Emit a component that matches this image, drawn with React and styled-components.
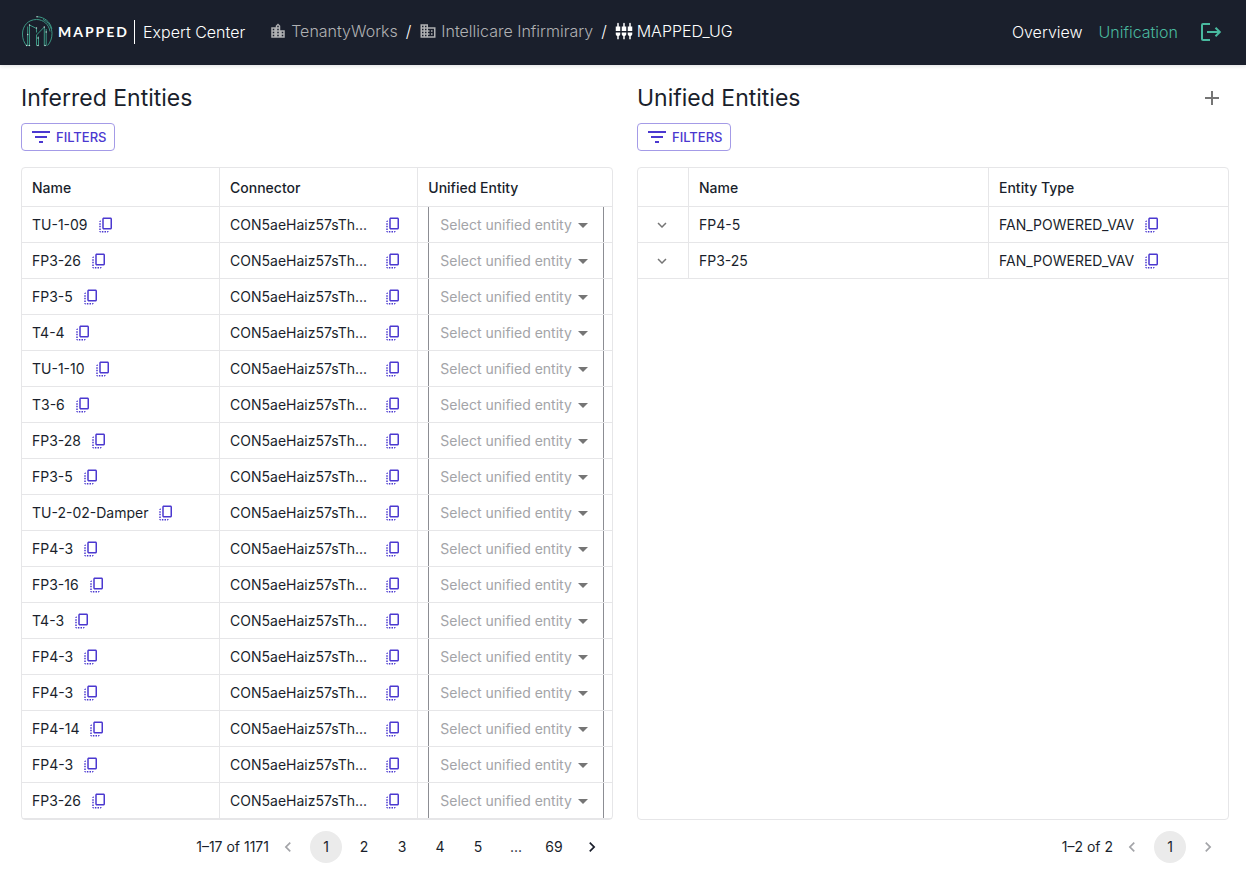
import React from "react";
import styled, { createGlobalStyle, ThemeProvider } from "styled-components";
import {
  MdAdd,
  MdArrowDropDown,
  MdChevronLeft,
  MdChevronRight,
  MdCopyAll,
  MdDomain,
  MdExpandMore,
  MdFilterList,
  MdLocationCity,
  MdSettingsInputComponent,
} from "react-icons/md";

const theme = {
  ink: "#1a1f2c",
  navy: "#1a1f2c",
  teal: "#49b99f",
  primary: "#4b38d0",
  primaryLight: "#a49be7",
  line: "#e6e6e8",
  muted: "#a3a4a8",
  grey: "#757575",
  selected: "#ebebeb",
};

const GlobalStyle = createGlobalStyle`
  *, *::before, *::after {
    box-sizing: border-box;
  }

  body {
    margin: 0;
    background: #fff;
    color: ${theme.ink};
    font-family: Inter, "Liberation Sans", sans-serif;
    font-size: 14px;
    line-height: 20px;
  }

  button, select {
    font: inherit;
    color: inherit;
  }

  svg {
    display: block;
    flex: none;
  }
`;

const Page = styled.div`
  display: flex;
  flex-direction: column;
  min-height: 100vh;
`;

const TopBar = styled.header`
  display: flex;
  align-items: center;
  height: 65px;
  padding: 0 24px 2px 21px;
  background: ${({ theme }) => theme.navy};
  color: #fff;
  font-size: 16px;
  font-weight: 300;
  line-height: 24px;
  box-shadow: 0 1px 4px rgba(26, 31, 44, 0.15);
`;

const Brand = styled.a`
  display: flex;
  align-items: center;
  color: inherit;
  text-decoration: none;
`;

const Wordmark = styled.span`
  margin-left: 5px;
  padding-right: 5px;
  font-family: Lato, sans-serif;
  font-size: 14px;
  font-weight: 700;
  letter-spacing: 2px;
`;

const Product = styled.span`
  padding-left: 8px;
  border-left: 1px solid #fff;
`;

const Breadcrumbs = styled.nav`
  display: flex;
  align-items: center;
  gap: 8px;
  margin-left: 24px;
  padding-bottom: 2px;
`;

const Crumb = styled.a`
  display: flex;
  align-items: center;
  gap: 4px;
  color: ${({ $current }) => ($current ? "#fff" : "#b0b1b3")};
  text-decoration: none;
`;

const Nav = styled.nav`
  display: flex;
  align-items: center;
  gap: 16px;
  margin-left: auto;
`;

const NavLink = styled.a`
  color: ${({ $active, theme }) => ($active ? theme.teal : "#fff")};
  text-decoration: none;
`;

const IconButton = styled.button`
  display: flex;
  align-items: center;
  justify-content: center;
  padding: ${({ $pad = 5 }) => $pad}px;
  border: 0;
  background: none;
  color: ${({ $color }) => $color || "inherit"};
  cursor: pointer;
`;

const LogoutButton = styled(IconButton)`
  margin-left: 4px;
`;

const Main = styled.main`
  flex: 1;
  display: grid;
  grid-template-columns: minmax(0, 1fr) minmax(0, 1fr);
  gap: 24px;
  padding: 13px 17px 11px 21px;
`;

const Panel = styled.section`
  display: flex;
  flex-direction: column;
  align-items: flex-start;
`;

const TitleRow = styled.div`
  display: flex;
  align-items: center;
  justify-content: space-between;
  width: 100%;
  height: 40px;
  margin-bottom: 5px;
`;

const Title = styled.h1`
  margin: 0;
  font-size: 23px;
  font-weight: 400;
  line-height: 32px;
`;

const FilterButton = styled.button`
  display: flex;
  align-items: center;
  gap: 3px;
  height: 28px;
  padding: 0 8px 0 7px;
  margin-bottom: 16px;
  border: 1px solid ${({ theme }) => theme.primaryLight};
  border-radius: 4px;
  background: #fff;
  color: ${({ theme }) => theme.primary};
  font-size: 13px;
  font-weight: 500;
  cursor: pointer;
`;

const Frame = styled.div`
  flex: 1;
  width: 100%;
  border: 1px solid ${({ theme }) => theme.line};
  border-radius: 4px;
`;

const Table = styled.table`
  width: 100%;
  table-layout: fixed;
  border-collapse: separate;
  border-spacing: 0;
`;

const Th = styled.th`
  width: ${({ $width }) => $width || "auto"};
  height: 39px;
  padding: 2px 10px 0;
  border-bottom: 1px solid ${({ theme }) => theme.line};
  font-weight: 500;
  text-align: left;

  & + & {
    border-left: 1px solid ${({ theme }) => theme.line};
  }
`;

const Td = styled.td`
  height: 36px;
  padding: 0 10px;
  border-bottom: 1px solid ${({ theme }) => theme.line};
  white-space: nowrap;

  & + & {
    border-left: 1px solid ${({ theme }) => theme.line};
  }
`;

const CopyCell = styled.div`
  display: flex;
  align-items: center;
  justify-content: ${({ $spread }) => ($spread ? "space-between" : "flex-start")};
  gap: 4px;
`;

const SelectBox = styled.div`
  position: relative;
  width: 176px;
  height: 35px;
  color: ${({ theme }) => theme.muted};

  svg {
    position: absolute;
    top: 6px;
    right: 9px;
    color: ${({ theme }) => theme.grey};
    pointer-events: none;
  }
`;

const Select = styled.select`
  display: block;
  width: 100%;
  height: 100%;
  padding: 0 30px 0 11px;
  border: solid #8c8d93;
  border-width: 0 1px;
  border-radius: 0;
  appearance: none;
  background: #fff;
`;

const Pager = styled.nav`
  display: flex;
  align-items: center;
  align-self: flex-end;
  gap: 6px;
  height: 32px;
  margin-top: 11px;
  padding-right: 5px;
`;

const PagerRange = styled.span`
  margin-right: -3px;
`;

const PageButton = styled.button`
  display: flex;
  align-items: center;
  justify-content: center;
  width: 32px;
  height: 32px;
  padding: 0;
  border: 0;
  border-radius: 16px;
  background: ${({ $selected, theme }) => ($selected ? theme.selected : "none")};
  cursor: pointer;

  &:disabled {
    color: ${({ theme }) => theme.muted};
    cursor: default;
  }
`;

const PageGap = styled.span`
  width: 32px;
  text-align: center;
`;

const CONNECTOR = "CON5aeHaiz57sTh...";

const inferred = [
  "TU-1-09",
  "FP3-26",
  "FP3-5",
  "T4-4",
  "TU-1-10",
  "T3-6",
  "FP3-28",
  "FP3-5",
  "TU-2-02-Damper",
  "FP4-3",
  "FP3-16",
  "T4-3",
  "FP4-3",
  "FP4-3",
  "FP4-14",
  "FP4-3",
  "FP3-26",
];

const unified = [
  { name: "FP4-5", type: "FAN_POWERED_VAV" },
  { name: "FP3-25", type: "FAN_POWERED_VAV" },
];

const nodes = [
  [16, 0.7],
  [8.5, 9],
  [6.7, 18.5],
  [15.5, 12],
  [17, 22],
  [23.3, 11],
  [25.2, 16],
  [5.5, 29.5],
  [8.5, 29.5],
  [17, 29.5],
  [24, 29.5],
];

const LogoMark = () => (
  <svg width="32" height="32" viewBox="0 0 32 32" fill="none" aria-hidden="true">
    <g stroke="#3b9583">
      <path d="M5.5 29.500C2.800 26.500 1.500 22.500 1.500 18 1.500 9.500 7.500 3.500 15.500 3.500c7 0 12.500 5 13.500 12" />
      <path d="M16 .7C23.500 1 29.500 6 30.800 13" />
      <path d="M22 3.500c5.500 2.500 9 8 9 14 0 4.500-1.500 9-4.500 12" />
      <path d="M5.500 29.500h3V9l7 3.500v4M6.700 29V10.500M15.500 29.500V19l7.800-8v18.500M15.500 29.500h2v-9M25.200 13v16.500h-2" />
    </g>
    <g fill="#c9d6d6">
      {nodes.map(([x, y]) => (
        <circle key={`${x}-${y}`} cx={x} cy={y} r="0.7" />
      ))}
    </g>
  </svg>
);

const LogoutIcon = () => (
  <svg width="24" height="24" viewBox="0 0 24 24" fill="none" stroke="currentColor" strokeWidth="2" aria-hidden="true">
    <path d="M12 4H5a1 1 0 0 0-1 1v14a1 1 0 0 0 1 1h7" />
    <path d="M9 12h13M17.500 7.700l4.300 4.300-4.300 4.300" />
  </svg>
);

const CopyButton = ({ label }) => (
  <IconButton type="button" $color={theme.primary} aria-label={`Copy ${label}`}>
    <MdCopyAll size={18} />
  </IconButton>
);

const Filters = () => (
  <FilterButton type="button">
    <MdFilterList size={24} />
    FILTERS
  </FilterButton>
);

const EntitySelect = ({ name }) => (
  <SelectBox>
    <Select defaultValue="" aria-label={`Unified entity for ${name}`}>
      <option value="">Select unified entity</option>
      {unified.map(entity => (
        <option key={entity.name} value={entity.name}>
          {entity.name}
        </option>
      ))}
    </Select>
    <MdArrowDropDown size={24} />
  </SelectBox>
);

const Pagination = ({ range, pages, hasNext }) => (
  <Pager aria-label={`Pages, ${range}`}>
    <PagerRange>{range}</PagerRange>
    <PageButton type="button" disabled aria-label="Previous page">
      <MdChevronLeft size={20} />
    </PageButton>
    {pages.map((page, i) =>
      page === "..." ? (
        <PageGap key={page}>{page}</PageGap>
      ) : (
        <PageButton key={page} type="button" $selected={i === 0}>
          {page}
        </PageButton>
      ),
    )}
    <PageButton type="button" disabled={!hasNext} aria-label="Next page">
      <MdChevronRight size={20} />
    </PageButton>
  </Pager>
);

const Header = () => (
  <TopBar>
    <Brand href="#home">
      <LogoMark />
      <Wordmark>MAPPED</Wordmark>
      <Product>Expert Center</Product>
    </Brand>
    <Breadcrumbs aria-label="Breadcrumb">
      <Crumb href="#org">
        <MdLocationCity size={18} />
        TenantyWorks
      </Crumb>
      <span>/</span>
      <Crumb href="#building">
        <MdDomain size={18} />
        Intellicare Infirmirary
      </Crumb>
      <span>/</span>
      <Crumb href="#gateway" $current>
        <MdSettingsInputComponent size={18} />
        MAPPED_UG
      </Crumb>
    </Breadcrumbs>
    <Nav>
      <NavLink href="#overview">Overview</NavLink>
      <NavLink href="#unification" $active>
        Unification
      </NavLink>
      <LogoutButton type="button" $pad={0} $color={theme.teal} aria-label="Log out">
        <LogoutIcon />
      </LogoutButton>
    </Nav>
  </TopBar>
);

const InferredEntities = () => (
  <Panel>
    <TitleRow>
      <Title>Inferred Entities</Title>
    </TitleRow>
    <Filters />
    <Frame>
      <Table>
        <thead>
          <tr>
            <Th $width="33.4%">Name</Th>
            <Th $width="33.6%">Connector</Th>
            <Th>Unified Entity</Th>
          </tr>
        </thead>
        <tbody>
          {inferred.map((name, i) => (
            <tr key={i}>
              <Td>
                <CopyCell>
                  {name}
                  <CopyButton label={name} />
                </CopyCell>
              </Td>
              <Td>
                <CopyCell $spread>
                  {CONNECTOR}
                  <CopyButton label="connector" />
                </CopyCell>
              </Td>
              <Td>
                <EntitySelect name={name} />
              </Td>
            </tr>
          ))}
        </tbody>
      </Table>
    </Frame>
    <Pagination range="1–17 of 1171" pages={["1", "2", "3", "4", "5", "...", "69"]} hasNext />
  </Panel>
);

const UnifiedEntities = () => (
  <Panel>
    <TitleRow>
      <Title>Unified Entities</Title>
      <IconButton type="button" $color={theme.grey} aria-label="Add unified entity">
        <MdAdd size={24} />
      </IconButton>
    </TitleRow>
    <Filters />
    <Frame>
      <Table>
        <thead>
          <tr>
            <Th $width="50px" aria-label="Details" />
            <Th $width="300px">Name</Th>
            <Th>Entity Type</Th>
          </tr>
        </thead>
        <tbody>
          {unified.map(({ name, type }) => (
            <tr key={name}>
              <Td>
                <IconButton type="button" $color={theme.grey} aria-label={`Expand ${name}`}>
                  <MdExpandMore size={18} />
                </IconButton>
              </Td>
              <Td>{name}</Td>
              <Td>
                <CopyCell>
                  {type}
                  <CopyButton label={type} />
                </CopyCell>
              </Td>
            </tr>
          ))}
        </tbody>
      </Table>
    </Frame>
    <Pagination range="1–2 of 2" pages={["1"]} />
  </Panel>
);

const App = () => (
  <ThemeProvider theme={theme}>
    <GlobalStyle />
    <Page>
      <Header />
      <Main>
        <InferredEntities />
        <UnifiedEntities />
      </Main>
    </Page>
  </ThemeProvider>
);

export default App;
